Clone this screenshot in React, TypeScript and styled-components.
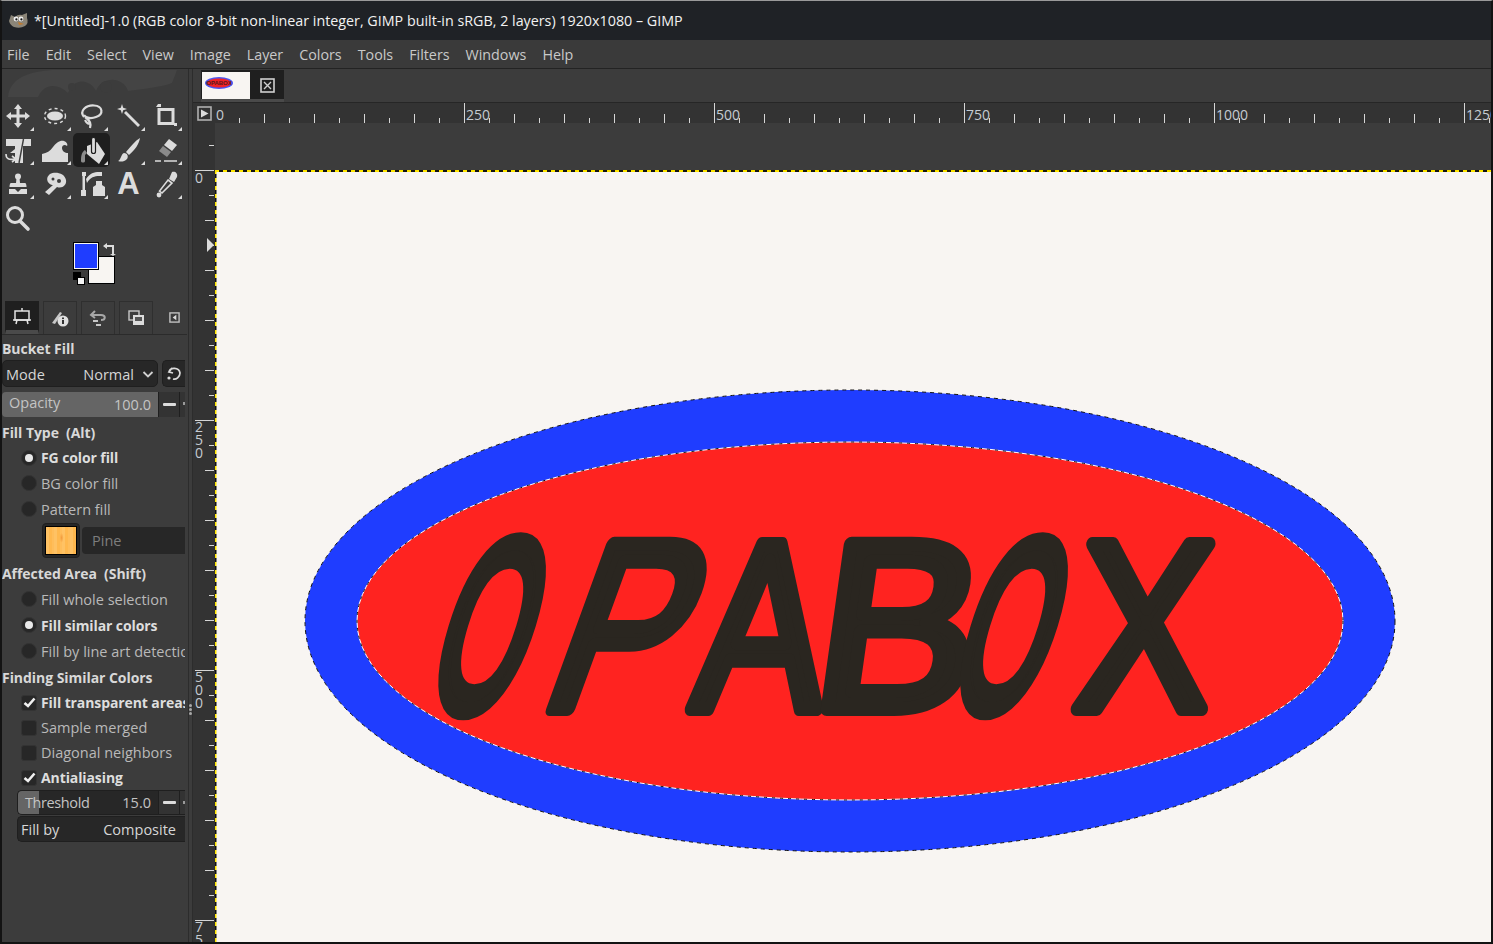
import styled, { createGlobalStyle } from "styled-components";

const GlobalStyle = createGlobalStyle`
  html, body { margin: 0; padding: 0; background: #111; }
  body { font-family: "Open Sans", "Noto Sans", sans-serif; font-size: 14.5px; }
`;

const Frame = styled.div`
  width: 1493px;
  height: 944px;
  box-sizing: border-box;
  border: 2px solid #131313;
  border-top: 1px solid #9a9a9a;
  display: flex;
  flex-direction: column;
  overflow: hidden;
  background: #3c3c3c;
`;

const TitleBar = styled.div`
  height: 39px;
  flex: none;
  background: #1f2226;
  display: flex;
  align-items: center;
  gap: 5px;
  padding-left: 6px;
  color: #f2f2f2;
  font-size: 14.3px;
`;

const MenuBar = styled.div`
  height: 28px;
  flex: none;
  box-sizing: content-box;
  display: flex;
  align-items: center;
  background: #3a3a3a;
  border-bottom: 1px solid #232323;
  color: #c9c9c9;
  font-size: 14.3px;
`;

const MenuItem = styled.span`
  padding: 0 8px;
  &:first-child { padding-left: 5px; }
`;

const Body = styled.div`
  flex: 1;
  display: flex;
  min-height: 0;
`;

const LeftDock = styled.div`
  width: 185px;
  flex: none;
  display: flex;
  flex-direction: column;
  overflow: hidden;
`;

const Watermark = styled.svg`
  display: block;
  flex: none;
  width: 185px;
  height: 30px;
`;

const ToolGrid = styled.div`
  display: grid;
  grid-template-columns: repeat(5, 37px);
  grid-auto-rows: 34px;
  margin-left: -3px;
  flex: none;
`;

const ToolButton = styled.div<{ $active?: boolean; $corner?: boolean }>`
  position: relative;
  display: flex;
  align-items: center;
  justify-content: center;
  border-radius: 5px;
  color: #dcdcdc;
  background: ${(p) => (p.$active ? "#1e1e1e" : "transparent")};
  &::after {
    content: "";
    display: ${(p) => (p.$corner ? "block" : "none")};
    position: absolute;
    right: 2px;
    bottom: 2px;
    border-left: 4px solid transparent;
    border-bottom: 4px solid #dcdcdc;
  }
`;

const TextTool = styled.span`
  font-family: "Liberation Sans", sans-serif;
  font-weight: 700;
  font-size: 31px;
  line-height: 34px;
  color: #dcdcdc;
`;

const ColorArea = styled.div`
  position: relative;
  flex: none;
  height: 66px;
`;

const Swatch = styled.div<{ $bg: string; $left: number; $top: number; $w: number; $h: number }>`
  position: absolute;
  left: ${(p) => p.$left}px;
  top: ${(p) => p.$top}px;
  width: ${(p) => p.$w}px;
  height: ${(p) => p.$h}px;
  box-sizing: border-box;
  background: ${(p) => p.$bg};
  border: 1px solid #000;
  outline: 1px solid ${(p) => (p.$w > 10 ? "#f5f5f5" : "transparent")};
  outline-offset: -2px;
`;

const SwapIcon = styled.svg`
  position: absolute;
  left: 100px;
  top: 7px;
  width: 14px;
  height: 14px;
`;

const DockTabs = styled.div`
  flex: none;
  height: 33px;
  display: flex;
  align-items: stretch;
  gap: 4px;
  padding-left: 3px;
  border-bottom: 1px solid #2b2b2b;
`;

const DockTab = styled.div<{ $active?: boolean }>`
  width: 34px;
  flex: none;
  box-sizing: border-box;
  display: flex;
  align-items: center;
  justify-content: center;
  background: ${(p) => (p.$active ? "#1f1f1f" : "transparent")};
  border: 1px solid ${(p) => (p.$active ? "#1f1f1f" : "#2f2f2f")};
  border-bottom: ${(p) => (p.$active ? "4px solid #4a4a4a" : "none")};
`;

const DockMenu = styled.div`
  width: 22px;
  flex: none;
  display: flex;
  align-items: center;
  justify-content: center;
  margin-left: 6px;
`;

const Options = styled.div`
  flex: 1;
  width: 183px;
  padding-top: 2px;
  overflow: hidden;
  color: #bcbcbc;
`;

const Heading = styled.div<{ $top?: number }>`
  height: 24px;
  line-height: 24px;
  margin-top: ${(p) => p.$top ?? 0}px;
  font-size: 14px;
  font-weight: 700;
  color: #d8d8d8;
  white-space: pre;
  letter-spacing: -0.05px;
`;

const ComboRow = styled.div`
  display: flex;
  gap: 4px;
  height: 27px;
  margin-top: -1px;
`;

const Combo = styled.div<{ $indent?: number; $clipped?: boolean }>`
  flex: 1;
  min-width: 0;
  box-sizing: border-box;
  display: flex;
  align-items: center;
  justify-content: space-between;
  padding: 1px 3px 0;
  margin-left: ${(p) => p.$indent ?? 0}px;
  margin-top: ${(p) => (p.$clipped ? 1 : 0)}px;
  height: ${(p) => (p.$clipped ? 26 : 27)}px;
  background: #272727;
  border: 1px solid #1f1f1f;
  border-right: ${(p) => (p.$clipped ? "none" : "1px solid #1f1f1f")};
  border-radius: ${(p) => (p.$clipped ? "5px 0 0 5px" : "5px")};
  color: #d6d6d6;
  white-space: nowrap;
`;

const ComboValue = styled.span`
  display: flex;
  align-items: center;
  gap: 8px;
`;

const CompositeValue = styled.span`
  margin-right: 6px;
`;

const IconButton = styled.div`
  width: 23px;
  flex: none;
  display: flex;
  align-items: center;
  justify-content: center;
  background: #272727;
  border: 1px solid #1f1f1f;
  border-radius: 5px 0 0 5px;
  border-right: none;
  box-sizing: border-box;
`;

const Spin = styled.div<{ $indent?: number; $top?: number; $dark?: boolean }>`
  display: flex;
  height: 25px;
  margin-top: ${(p) => p.$top ?? 0}px;
  margin-left: ${(p) => p.$indent ?? 0}px;
  background: ${(p) => (p.$dark ? "#272727" : "transparent")};
  border-radius: 5px 0 0 5px;
  border: ${(p) => (p.$dark ? "1px solid #1f1f1f" : "none")};
  border-right: none;
  box-sizing: border-box;
`;

const SpinTrack = styled.div`
  position: relative;
  flex: 1;
  display: flex;
  align-items: center;
  justify-content: space-between;
  padding: 0 7px 0 7px;
  min-width: 0;
  color: #c4c4c4;
`;

const SpinFill = styled.div`
  position: absolute;
  left: 0;
  top: 0;
  bottom: 0;
  background: #656565;
  border-radius: 4px 0 0 4px;
`;

const SpinText = styled.span<{ $lift?: number; $tight?: boolean }>`
  position: relative;
  top: ${(p) => -(p.$lift ?? 0)}px;
  letter-spacing: ${(p) => (p.$tight ? -0.4 : 0)}px;
`;

const SpinButton = styled.div`
  width: 22px;
  flex: none;
  box-sizing: border-box;
  display: flex;
  align-items: center;
  justify-content: center;
  background: #333;
  border-left: 1px solid #1f1f1f;
  border-right: 1px solid #1f1f1f;
  &::before {
    content: "";
    width: 13px;
    height: 3px;
    border-radius: 1px;
    background: #dcdcdc;
  }
`;

const SpinStub = styled.div`
  width: 5px;
  flex: none;
  background: #333;
  &::before {
    content: "";
    display: block;
    width: 3px;
    height: 3px;
    margin: 10px 0 0 3px;
    background: #9a9a9a;
  }
`;

const OptionRow = styled.div<{ $h: number; $on?: boolean }>`
  height: ${(p) => p.$h}px;
  display: flex;
  align-items: center;
  gap: 4px;
  padding-left: 19px;
  white-space: nowrap;
  font-size: ${(p) => (p.$on ? 14 : 14.5)}px;
  font-weight: ${(p) => (p.$on ? 700 : 400)};
  color: ${(p) => (p.$on ? "#dedede" : "#b9b9b9")};
  letter-spacing: ${(p) => (p.$on ? -0.1 : 0)}px;
`;

const Radio = styled.span<{ $on?: boolean }>`
  width: 16px;
  height: 16px;
  box-sizing: border-box;
  flex: none;
  border-radius: 50%;
  background: #272727;
  border: 1px solid #333;
  display: flex;
  align-items: center;
  justify-content: center;
  &::before {
    content: "";
    display: ${(p) => (p.$on ? "block" : "none")};
    width: 8px;
    height: 8px;
    border-radius: 50%;
    background: #e8e8e8;
  }
`;

const Check = styled.span`
  width: 16px;
  height: 16px;
  box-sizing: border-box;
  flex: none;
  border-radius: 3px;
  background: #272727;
  border: 1px solid #333;
  display: flex;
  align-items: center;
  justify-content: center;
`;

const PatternRow = styled.div`
  height: 36px;
  display: flex;
  align-items: center;
  gap: 2px;
  padding-left: 40px;
`;

const PatternButton = styled.div`
  width: 38px;
  height: 35px;
  flex: none;
  box-sizing: border-box;
  padding: 2px;
  background: #272727;
  border: 1px solid #1f1f1f;
  border-radius: 4px;
`;

const PatternPreview = styled.div`
  width: 100%;
  height: 100%;
  box-sizing: border-box;
  border: 1px solid #000;
  background:
    radial-gradient(ellipse 2px 5px at 52% 40%, #f29a3c, transparent),
    repeating-linear-gradient(90deg, #ffc264 0 3px, #ffb84e 3px 6px, #ffbd5a 6px 8px);
`;

const PatternName = styled.div`
  flex: 1;
  height: 27px;
  line-height: 27px;
  padding-left: 10px;
  background: #272727;
  border-radius: 4px 0 0 4px;
  color: #7d7d7d;
`;

const Divider = styled.div`
  width: 5px;
  flex: none;
  display: flex;
  flex-direction: column;
  align-items: center;
  gap: 1px;
  padding-top: 635px;
  background: #3c3c3c;
  border-left: 1px solid #2c2c2c;
  border-right: 1px solid #2c2c2c;
  box-sizing: border-box;
  margin-left: 1px;
`;

const GripDot = styled.span`
  width: 3px;
  height: 3px;
  flex: none;
  border-radius: 50%;
  background: #a8a8a8;
`;

const Center = styled.div`
  flex: 1;
  min-width: 0;
  display: flex;
  flex-direction: column;
`;

const TabBar = styled.div`
  height: 34px;
  flex: none;
  box-sizing: border-box;
  padding: 1px 0 0 8px;
  background: #3c3c3c;
  border-bottom: 1px solid #262626;
`;

const ImageTab = styled.div`
  width: 83px;
  height: 32px;
  box-sizing: border-box;
  display: flex;
  background: #1f1f1f;
  border-bottom: 3px solid #4a4a4a;
  padding: 2px 0 0 1px;
`;

const Thumb = styled.svg`
  width: 48px;
  height: 27px;
  display: block;
  flex: none;
`;

const CloseBox = styled.div`
  flex: 1;
  display: flex;
  align-items: center;
  justify-content: center;
`;

const Workspace = styled.div`
  flex: 1;
  min-height: 0;
  display: grid;
  grid-template-columns: 22px 1fr;
  grid-template-rows: 20px 1fr;
`;

const Corner = styled.div`
  background: #333;
  display: flex;
  align-items: center;
  justify-content: center;
`;

const RulerSvg = styled.svg`
  display: block;
  background: #333;
  width: 100%;
  height: 100%;
`;

const RulerLabel = styled.text`
  font-family: "Open Sans", sans-serif;
  font-size: 14px;
  fill: #c6ccd2;
`;

const Viewport = styled.div`
  min-height: 0;
  min-width: 0;
  padding-top: 47px;
  background: #3c3c3c;
  overflow: hidden;
  display: flex;
`;

const Paper = styled.svg`
  display: block;
  width: 100%;
  height: 100%;
  background: #f8f5f2;
`;

const Letter = styled.text`
  font-family: "Liberation Sans", sans-serif;
  font-weight: 400;
  fill: #2a2620;
  stroke: #2a2620;
  stroke-linejoin: round;
`;

const menus = ["File", "Edit", "Select", "View", "Image", "Layer", "Colors", "Tools", "Filters", "Windows", "Help"];

const Wilber = () => (
  <svg width="21" height="17" viewBox="0 0 21 17">
    <path d="M1 9 L3 3 L7 5 Q10 2 14 3 L19 1 L19 6 Q21 11 17 14 Q12 17 6 15 Q2 13 1 9Z" fill="#8b8578" />
    <circle cx="8" cy="7" r="2.4" fill="#eee" />
    <circle cx="13" cy="7" r="2.4" fill="#eee" />
    <circle cx="8.4" cy="7.4" r="1.1" fill="#111" />
    <circle cx="13.4" cy="7.4" r="1.1" fill="#111" />
    <path d="M10 10 L16 12 L11 13Z" fill="#c27a2c" />
  </svg>
);

const G = ({ children }: { children: React.ReactNode }) => (
  <svg width="28" height="28" viewBox="0 0 28 28" fill="#dcdcdc">
    {children}
  </svg>
);

const toolIcons: React.ReactNode[] = [
  <G>
    <path d="M14 2 L18 7 H15.5 V12.5 H21 V10 L26 14 L21 18 V15.5 H15.5 V21 H18 L14 26 L10 21 H12.5 V15.5 H7 V18 L2 14 L7 10 V12.5 H12.5 V7 H10Z" />
  </G>,
  <G>
    <ellipse cx="14" cy="14" rx="8" ry="4.5" />
    <ellipse cx="14" cy="14" rx="10.5" ry="7.5" fill="none" stroke="#dcdcdc" strokeWidth="1.4" strokeDasharray="3 3" />
  </G>,
  <G>
    <path d="M6 15 C1 9 8 3 16 3.5 C25 4 26 12 18 15 C13 17 8 16 6 13 M7 15 C10 17 14 20 12 26 M7 18 C9 22 11 22 12 21" fill="none" stroke="#dcdcdc" strokeWidth="2.2" />
  </G>,
  <G>
    <path d="M11 9 L25 23 L23 25 L9 11Z" />
    <path d="M7 2 L8.2 5.8 L12 7 L8.2 8.2 L7 12 L5.8 8.2 L2 7 L5.8 5.8Z" />
  </G>,
  <G>
    <rect x="7" y="7.5" width="14" height="14" fill="none" stroke="#dcdcdc" strokeWidth="3" />
    <path d="M4 5 H9 V2 H6Z" />
    <path d="M22 21 H25 V24 H22Z" />
  </G>,
  <G>
    <path d="M2 3 H27 V10 H19 V27 H11 V17 H6 L11 13 V10 H2Z" />
    <path d="M15 27 L19.5 3" stroke="#3c3c3c" strokeWidth="1.4" />
    <path d="M2 18 C2 23 5 24 11 23 M8 20 L12 23 L8 26" fill="none" stroke="#dcdcdc" strokeWidth="1.6" />
  </G>,
  <G>
    <path d="M1 26 V18 C6 17 9 15 12 11 C15 7 19 4 23 5 C26 6 27 9 26 10 C24 8 21 9 21 12 C21 15 24 17 27 17 V26Z" />
  </G>,
  <G>
    <path d="M9 10 L19 6 L27 18 L21 28 L9 18Z" />
    <rect x="13.5" y="1.5" width="4" height="16" rx="2" stroke="#1e1e1e" strokeWidth="1.2" />
    <path d="M7 14 C4 16 3 19 3 25 C3 27 7 27 7 25 V19 L9 17Z" fill="#8c8c8c" />
  </G>,
  <G>
    <path d="M25 2 C24 8 20 14 14 19 L11 16 C16 10 20 5 25 2Z" />
    <path d="M9 17 C12 17 14 20 12 23 C9 26 6 26 3 25 C6 24 6 18 9 17Z" />
  </G>,
  <G>
    <path d="M17 3 L25 9 L20 15 L12 9Z" />
    <path d="M11 10 L19 16 L15 21 L7 15Z" fill="#8a8a8a" />
    <path d="M3 25 H9 M12 25 H25" stroke="#dcdcdc" strokeWidth="1.4" />
  </G>,
  <G>
    <circle cx="14" cy="6.5" r="3" />
    <path d="M12.5 8 H15.5 L16 13 H21 C22 13 22.5 15 22.5 17 H5.5 C5.5 15 6 13 7 13 H12Z" />
    <path d="M5 19 H11 L14 22 L17 19 H23 V24 H5Z" />
  </G>,
  <G>
    <path d="M9 4 C14 1 24 3 25 10 C26 15 21 19 16 17 L8 25 L4 22 L12 15 C8 15 3 9 9 4Z" />
    <circle cx="18" cy="11" r="2" fill="#3c3c3c" />
    <circle cx="12" cy="9" r="1.5" fill="#3c3c3c" />
  </G>,
  <G>
    <path d="M4 2 H8 V6 H7 V20 H8 V26 H3 V20 H4.5 V6 H4Z" />
    <path d="M8 9 C12 3 16 2 21 2 H24 V6 H21 C17 6 12 7 9 13Z" />
    <path d="M18 11 H24 V15 L27 17 V26 H15 V17 L18 15Z" />
  </G>,
  <TextTool>A</TextTool>,
  <G>
    <path d="M20 2 C23 1 26 3 25 7 L22 12 L17 9Z" />
    <path d="M16 10 L20 13 L10 23 L7.5 21Z" fill="none" stroke="#dcdcdc" strokeWidth="1.6" />
    <circle cx="7" cy="25" r="2.4" />
  </G>,
  <G>
    <circle cx="11" cy="11" r="7.5" fill="none" stroke="#dcdcdc" strokeWidth="3" />
    <path d="M16 17 L24 25" stroke="#dcdcdc" strokeWidth="3.6" strokeLinecap="round" />
  </G>,
];

const noCorner = [13, 15];
const majorStep = 250;

const HorizontalTicks = () => {
  const ticks = [];
  for (let x = 215; x < 1493; x += 25) {
    const unit = x - 215;
    const top = unit % majorStep === 0 ? 103 : unit % 50 === 0 ? 114 : 118;
    ticks.push(<line key={x} x1={x - 0.5} x2={x - 0.5} y1={top} y2={123} stroke="#d6d6d6" />);
  }
  return <>{ticks}</>;
};

const VerticalTicks = () => {
  const ticks = [];
  for (let y = 145; y < 944; y += 25) {
    const unit = y - 170;
    const left = unit % majorStep === 0 ? 195 : unit % 50 === 0 ? 205 : 209;
    ticks.push(<line key={y} x1={left} x2={214} y1={y + 0.5} y2={y + 0.5} stroke="#d6d6d6" />);
  }
  return <>{ticks}</>;
};

const stacked = [
  { y: 183, digits: "0" },
  { y: 432, digits: "250" },
  { y: 682, digits: "500" },
  { y: 932, digits: "750" },
];

const letters = [
  { ch: "O", x: 422, sx: 0.48, skew: -17, stroke: 18 },
  { ch: "P", x: 536, sx: 0.8, skew: -20, stroke: 14 },
  { ch: "A", x: 690, sx: 0.8, skew: -6, stroke: 14 },
  { ch: "B", x: 808, sx: 1, skew: -8, stroke: 14 },
  { ch: "O", x: 944, sx: 0.48, skew: -17, stroke: 18 },
  { ch: "X", x: 1072, sx: 0.84, skew: -4, stroke: 14 },
];

const App = () => (
  <Frame>
    <GlobalStyle />
    <TitleBar>
      <Wilber />
      <span>*[Untitled]-1.0 (RGB color 8-bit non-linear integer, GIMP built-in sRGB, 2 layers) 1920x1080 – GIMP</span>
    </TitleBar>
    <MenuBar>
      {menus.map((m) => (
        <MenuItem key={m}>{m}</MenuItem>
      ))}
    </MenuBar>
    <Body>
      <LeftDock>
        <Watermark viewBox="0 0 185 30">
          <path d="M6 28 C8 10 24 3 50 1 H175 L170 14 C160 18 140 20 126 22 C122 8 100 6 94 22 C88 10 72 8 66 24 C56 14 42 14 36 28Z" fill="#444" />
          <circle cx="104" cy="18" r="6" fill="#3c3c3c" />
          <circle cx="70" cy="18" r="4" fill="#3c3c3c" />
        </Watermark>
        <ToolGrid>
          {toolIcons.map((icon, i) => (
            <ToolButton key={i} $active={i === 7} $corner={!noCorner.includes(i)}>
              {icon}
            </ToolButton>
          ))}
        </ToolGrid>
        <ColorArea>
          <Swatch $bg="#f8f5f2" $left={86} $top={21} $w={27} $h={28} />
          <Swatch $bg="#1f3dff" $left={71} $top={7} $w={26} $h={28} />
          <Swatch $bg="#000" $left={71} $top={37} $w={8} $h={8} />
          <Swatch $bg="#f5f5f5" $left={75} $top={42} $w={8} $h={8} />
          <SwapIcon viewBox="0 0 14 14">
            <path d="M1 4 L5 1 V3 H12 V12 H14 L11 14 L8 12 H10 V5 H5 V7Z" fill="#dcdcdc" />
          </SwapIcon>
        </ColorArea>
        <DockTabs>
          <DockTab $active>
            <svg width="20" height="20" viewBox="0 0 20 20" fill="none" stroke="#e4e4e4" strokeWidth="1.5">
              <rect x="3" y="5" width="14" height="9" />
              <path d="M10 2 V5 M1 14 H19 M5 14 L4 18 M15 14 L16 18" />
            </svg>
          </DockTab>
          <DockTab>
            <svg width="20" height="20" viewBox="0 0 20 20">
              <path d="M2 15 L10 4 L12 5 L5 16Z" fill="#c8c8c8" />
              <circle cx="13" cy="13" r="5.5" fill="#e0e0e0" />
              <rect x="12" y="12" width="2" height="4" fill="#333" />
              <rect x="12" y="9.5" width="2" height="1.6" fill="#333" />
            </svg>
          </DockTab>
          <DockTab>
            <svg width="20" height="20" viewBox="0 0 20 20" fill="none" stroke="#a8a8a8" strokeWidth="2">
              <path d="M7 3 L3 7 L7 10 M3 7 H13 C18 7 18 12 13 12" />
              <path d="M10 13 L5 13 M8 17 H13" stroke="#c8c8c8" />
            </svg>
          </DockTab>
          <DockTab>
            <svg width="20" height="20" viewBox="0 0 20 20" fill="none">
              <rect x="3" y="3" width="10" height="9" stroke="#c8c8c8" strokeWidth="1.4" />
              <rect x="7" y="7" width="11" height="10" fill="#dcdcdc" />
              <rect x="9" y="9" width="7" height="4" fill="#555" />
            </svg>
          </DockTab>
          <DockMenu>
            <svg width="11" height="11" viewBox="0 0 12 12">
              <rect x="1" y="1" width="10" height="10" fill="none" stroke="#c4c4c4" strokeWidth="1.5" />
              <path d="M8 3 V9 L4 6Z" fill="#dcdcdc" />
            </svg>
          </DockMenu>
        </DockTabs>
        <Options>
          <Heading>Bucket Fill</Heading>
          <ComboRow>
            <Combo>
              <span>Mode</span>
              <ComboValue>
                Normal
                <svg width="12" height="12" viewBox="0 0 12 12" fill="none" stroke="#d0d0d0" strokeWidth="1.8">
                  <path d="M1.5 4 L6 8.5 L10.5 4" />
                </svg>
              </ComboValue>
            </Combo>
            <IconButton>
              <svg width="16" height="16" viewBox="0 0 16 16" fill="none" stroke="#dcdcdc" strokeWidth="1.7">
                <path d="M3 6 C4 1 13 1 14 7 C14 11 10 14 7 13 M6 2 L3 6 L7 7" />
                <circle cx="3" cy="12" r="1.6" fill="#dcdcdc" stroke="none" />
              </svg>
            </IconButton>
          </ComboRow>
          <Spin $top={5}>
            <SpinTrack>
              <SpinFill style={{ width: "100%" }} />
              <SpinText $lift={2}>Opacity</SpinText>
              <SpinText>100.0</SpinText>
            </SpinTrack>
            <SpinButton />
            <SpinStub />
          </Spin>
          <Heading $top={4}>Fill Type  (Alt)</Heading>
          <OptionRow $h={25} $on>
            <Radio $on />
            FG color fill
          </OptionRow>
          <OptionRow $h={26}>
            <Radio />
            BG color fill
          </OptionRow>
          <OptionRow $h={26}>
            <Radio />
            Pattern fill
          </OptionRow>
          <PatternRow>
            <PatternButton>
              <PatternPreview />
            </PatternButton>
            <PatternName>Pine</PatternName>
          </PatternRow>
          <Heading $top={4}>Affected Area  (Shift)</Heading>
          <OptionRow $h={26}>
            <Radio />
            Fill whole selection
          </OptionRow>
          <OptionRow $h={26} $on>
            <Radio $on />
            Fill similar colors
          </OptionRow>
          <OptionRow $h={26}>
            <Radio />
            Fill by line art detection
          </OptionRow>
          <Heading $top={2}>Finding Similar Colors</Heading>
          <OptionRow $h={25} $on>
            <Check>
              <CheckMark />
            </Check>
            Fill transparent areas
          </OptionRow>
          <OptionRow $h={25}>
            <Check />
            Sample merged
          </OptionRow>
          <OptionRow $h={25}>
            <Check />
            Diagonal neighbors
          </OptionRow>
          <OptionRow $h={25} $on>
            <Check>
              <CheckMark />
            </Check>
            Antialiasing
          </OptionRow>
          <Spin $indent={15} $dark>
            <SpinTrack>
              <SpinFill style={{ width: "21px" }} />
              <SpinText $tight>Threshold</SpinText>
              <SpinText>15.0</SpinText>
            </SpinTrack>
            <SpinButton />
            <SpinStub />
          </Spin>
          <Combo $indent={15} $clipped>
            <span>Fill by</span>
            <CompositeValue>Composite</CompositeValue>
          </Combo>
        </Options>
      </LeftDock>
      <Divider>
        <GripDot />
        <GripDot />
        <GripDot />
      </Divider>
      <Center>
        <TabBar>
          <ImageTab>
            <Thumb viewBox="0 0 48 27">
              <rect width="48" height="27" fill="#f8f5f2" />
              <ellipse cx="17" cy="11" rx="14" ry="6" fill="#4a55f0" />
              <ellipse cx="17" cy="11" rx="12" ry="4.5" fill="#f02326" />
              <text x="17" y="13" textAnchor="middle" fontSize="6" fontFamily="Liberation Sans" fontWeight="700" fill="#5a1a1a">
                OPABOX
              </text>
            </Thumb>
            <CloseBox>
              <svg width="15" height="15" viewBox="0 0 15 15" fill="none" stroke="#d0d0d0">
                <rect x="1" y="1" width="13" height="13" strokeWidth="1.6" />
                <path d="M4 4 L11 11 M11 4 L4 11" strokeWidth="1.4" />
              </svg>
            </CloseBox>
          </ImageTab>
        </TabBar>
        <Workspace>
          <Corner>
            <svg width="15" height="15" viewBox="0 0 15 15">
              <rect x="1" y="1" width="13" height="13" fill="none" stroke="#b0b0b0" strokeWidth="1.6" />
              <path d="M4 3.5 V11.5 L11.5 7.5Z" fill="#dcdcdc" />
            </svg>
          </Corner>
          <RulerSvg viewBox="215 103 1276 20" preserveAspectRatio="xMinYMin slice">
            <HorizontalTicks />
            {[0, 250, 500, 750, 1000, 1250].map((v) => (
              <RulerLabel key={v} x={v + 216} y={120}>
                {v}
              </RulerLabel>
            ))}
          </RulerSvg>
          <RulerSvg viewBox="193 123 22 819" preserveAspectRatio="xMinYMin slice">
            <VerticalTicks />
            <path d="M207 238 L214 245 L207 252Z" fill="#dcdcdc" />
            {stacked.map((s) =>
              s.digits.split("").map((d, i) => (
                <RulerLabel key={`${s.y}-${i}`} x={195} y={s.y + i * 13}>
                  {d}
                </RulerLabel>
              ))
            )}
          </RulerSvg>
          <Viewport>
            <Paper viewBox="215 170 1276 772" preserveAspectRatio="xMinYMin slice">
              <ellipse cx="850" cy="621" rx="545" ry="231" fill="#1f3dff" />
              <ellipse cx="850" cy="621" rx="545" ry="231" fill="none" stroke="#111" strokeDasharray="4 4" />
              <ellipse cx="850" cy="621" rx="493" ry="179" fill="#ff2320" />
              <ellipse cx="850" cy="621" rx="493" ry="179" fill="none" stroke="#fff" />
              <ellipse cx="850" cy="621" rx="493" ry="179" fill="none" stroke="#111" strokeDasharray="3 5" />
              {letters.map((l, i) => (
                <Letter
                  key={i}
                  fontSize={240}
                  strokeWidth={l.stroke}
                  transform={`translate(${l.x} 709) skewX(${l.skew}) scale(${l.sx} 1)`}
                >
                  {l.ch}
                </Letter>
              ))}
              <path d="M215 171 H1493" stroke="#ffe600" strokeWidth="2" strokeDasharray="4 4" />
              <path d="M215 171 H1493" stroke="#111" strokeWidth="2" strokeDasharray="4 4" strokeDashoffset="4" />
              <path d="M215.75 170 V944" stroke="#ffe600" strokeWidth="1.5" strokeDasharray="4 4" />
              <path d="M215.75 170 V944" stroke="#111" strokeWidth="1.5" strokeDasharray="4 4" strokeDashoffset="4" />
            </Paper>
          </Viewport>
        </Workspace>
      </Center>
    </Body>
  </Frame>
);

function CheckMark() {
  return (
    <svg width="13" height="13" viewBox="0 0 13 13" fill="none" stroke="#f0f0f0" strokeWidth="2.6">
      <path d="M1.5 7 L5 10 L11.5 2.5" />
    </svg>
  );
}

export default App;
